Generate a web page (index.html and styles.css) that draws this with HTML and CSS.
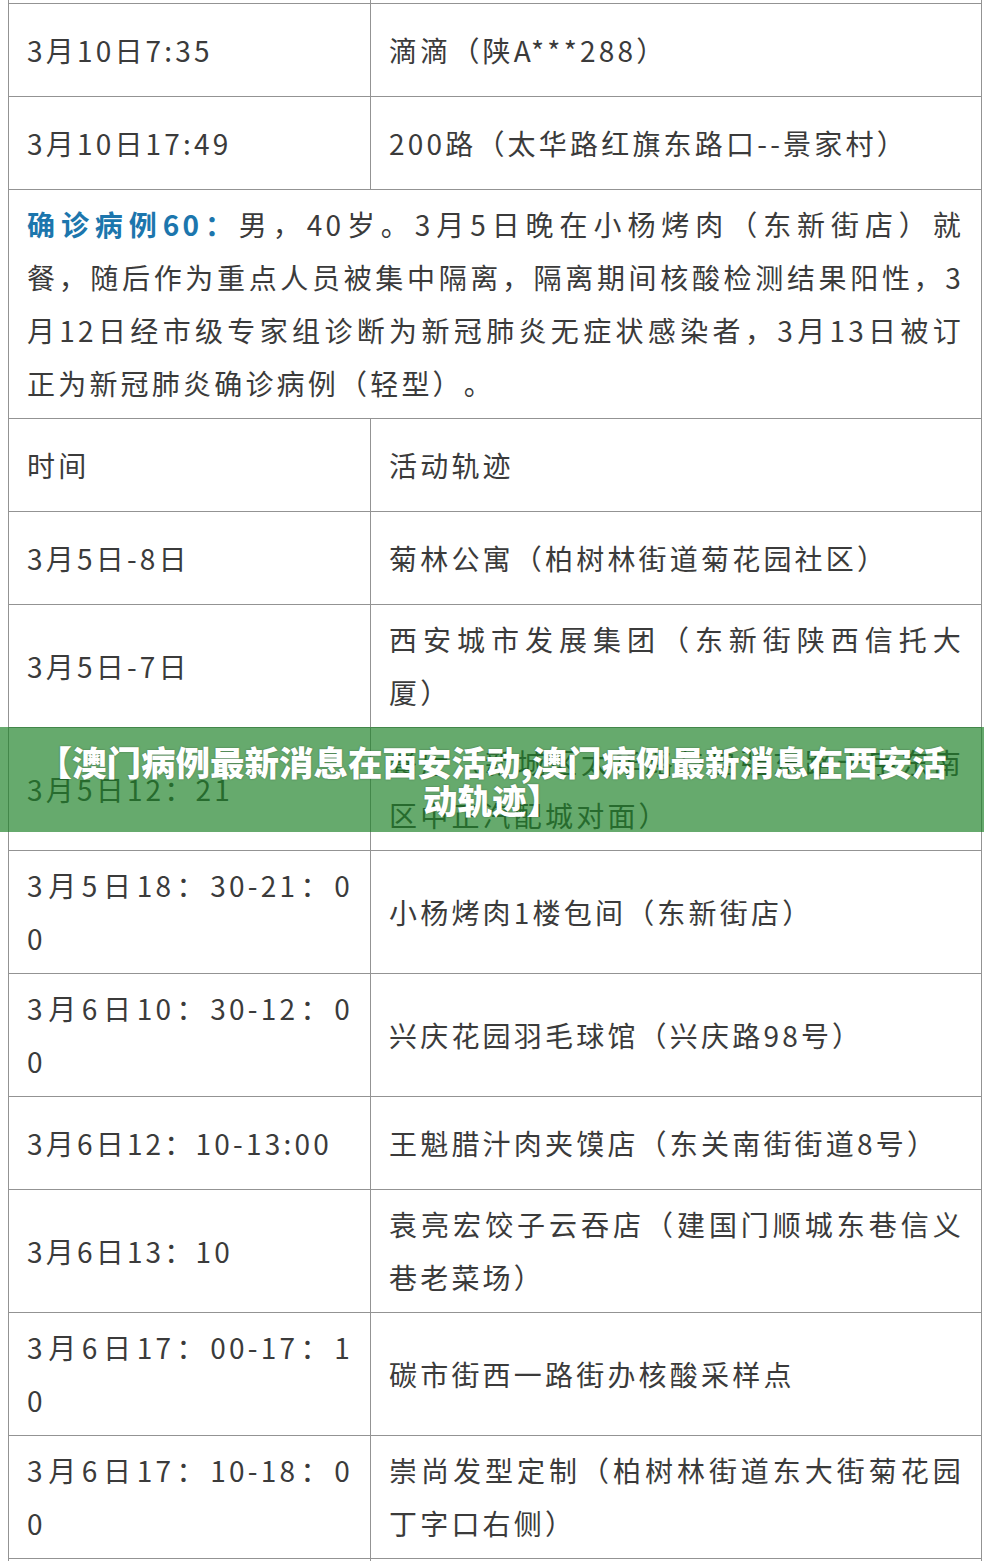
FILE: index.html
```html
<!DOCTYPE html>
<html lang="zh-CN">
<head>
<meta charset="utf-8">
<title>澳门病例最新消息在西安活动轨迹</title>
<link rel="stylesheet" href="styles.css">
</head>
<body>
<div class="page">
  <table class="trail">
    <colgroup><col class="c-time"><col class="c-place"></colgroup>
    <tbody>
      <tr class="r1"><td>&nbsp;</td><td>&nbsp;</td></tr>
      <tr class="r1"><td>3月10日7:35</td><td>滴滴（陕A***288）</td></tr>
      <tr class="r1"><td>3月10日17:49</td><td>200路（太华路红旗东路口--景家村）</td></tr>
      <tr>
        <td colspan="2" class="case">
          <span class="jl"><b class="label">确诊病例60：</b>男，40岁。3月5日晚在小杨烤肉（东新街店）就</span>
          <span class="jl">餐，随后作为重点人员被集中隔离，隔离期间核酸检测结果阳性，3</span>
          <span class="jl">月12日经市级专家组诊断为新冠肺炎无症状感染者，3月13日被订</span>
          <span class="ln">正为新冠肺炎确诊病例（轻型）。</span>
        </td>
      </tr>
      <tr class="r1"><td>时间</td><td>活动轨迹</td></tr>
      <tr class="r1"><td>3月5日-8日</td><td>菊林公寓（柏树林街道菊花园社区）</td></tr>
      <tr><td>3月5日-7日</td><td><span class="jl">西安城市发展集团（东新街陕西信托大</span><span class="ln">厦）</span></td></tr>
      <tr><td>3月5日12：21</td><td><span class="jl">餐厅（新城区太华路与自强东路十字东南</span><span class="ln">区中正汽配城对面）</span></td></tr>
      <tr><td><span class="jl">3月5日18：30-21：0</span><span class="ln">0</span></td><td>小杨烤肉1楼包间（东新街店）</td></tr>
      <tr><td><span class="jl">3月6日10：30-12：0</span><span class="ln">0</span></td><td>兴庆花园羽毛球馆（兴庆路98号）</td></tr>
      <tr class="r1"><td>3月6日12：10-13:00</td><td>王魁腊汁肉夹馍店（东关南街街道8号）</td></tr>
      <tr><td>3月6日13：10</td><td><span class="jl">袁亮宏饺子云吞店（建国门顺城东巷信义</span><span class="ln">巷老菜场）</span></td></tr>
      <tr><td><span class="jl">3月6日17：00-17：1</span><span class="ln">0</span></td><td>碳市街西一路街办核酸采样点</td></tr>
      <tr><td><span class="jl">3月6日17：10-18：0</span><span class="ln">0</span></td><td><span class="jl">崇尚发型定制（柏树林街道东大街菊花园</span><span class="ln">丁字口右侧）</span></td></tr>
      <tr class="r1"><td>&nbsp;</td><td>&nbsp;</td></tr>
    </tbody>
  </table>
  <div class="banner"><h1 class="banner-title">【澳门病例最新消息在西安活动,澳门病例最新消息在西安活动轨迹】</h1></div>
</div>
</body>
</html>
```

FILE: styles.css
```css
html, body {
  margin: 0;
  padding: 0;
  background: #ffffff;
}

.page {
  position: relative;
  padding-left: 8px;
  overflow: hidden;
  height: 1561px;
}

.trail {
  border-collapse: collapse;
  table-layout: fixed;
  width: 973px;
  margin-top: -90px;
  font-family: "Noto Sans CJK SC", "Noto Sans", sans-serif;
  font-size: 28px;
  letter-spacing: 3.2px;
  line-height: 53px;
  color: #3b3b3b;
  text-spacing-trim: space-all;
}

.c-time { width: 362px; }
.c-place { width: 611px; }

.trail td {
  border: 1px solid #939393;
  padding: 8px 17px 8px 18px;
  vertical-align: middle;
  text-align: justify;
}

.trail tr.r1 td {
  height: 93px;
  padding-top: 0;
  padding-bottom: 0;
  box-sizing: border-box;
}

.jl {
  display: block;
  text-align: justify;
  text-align-last: justify;
}

.ln {
  display: block;
}

.label {
  color: #1c76ad;
  font-weight: 700;
}

.banner {
  position: absolute;
  top: 727px;
  left: 0;
  right: 0;
  height: 105px;
  background: rgba(30, 130, 40, 0.68);
  display: flex;
  align-items: center;
  justify-content: center;
  padding: 0 36px;
  box-sizing: border-box;
}

.banner-title {
  margin: 0;
  font-family: "Noto Sans CJK SC", sans-serif;
  font-size: 34.5px;
  font-weight: 900;
  line-height: 38px;
  color: #ffffff;
  text-align: center;
  text-spacing-trim: space-all;
  text-shadow: 0 0 2px rgba(0, 0, 0, 0.35);
}
```
